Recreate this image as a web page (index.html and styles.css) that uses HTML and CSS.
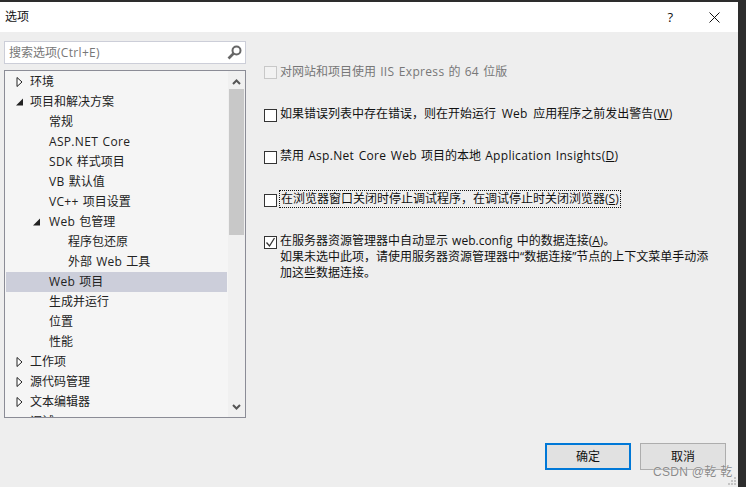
FILE: index.html
```html
<!DOCTYPE html>
<html lang="zh">
<head>
<meta charset="utf-8">
<title>选项</title>
<link rel="stylesheet" href="styles.css">
</head>
<body>
<div class="dialog">
  <header class="titlebar">
    <span class="title">选项</span>
    <span class="help">?</span>
    <svg class="close" width="11" height="11" viewBox="0 0 11 11"><path d="M.5.5l10 10M10.500.5l-10 10" stroke="#111" fill="none"/></svg>
  </header>
  <main class="body">
    <aside class="left">
      <div class="search">
        <span>搜索选项<span class="en">(Ctrl+E)</span></span>
        <svg width="15" height="15" viewBox="0 0 15 15"><circle cx="9.500" cy="5.500" r="4" fill="none" stroke="#666" stroke-width="2"/><path d="M6.500 8.500L1.500 13.500" stroke="#666" stroke-width="2.600" fill="none"/></svg>
      </div>
      <div class="treebox">
        <div class="tree">
          <div class="row l1"><svg class="arrow" width="6" height="10" viewBox="0 0 6 10"><path d="M.5.500L5.500 5 .5 9.500z" fill="#fff" stroke="#222"/></svg><span>环境</span></div>
          <div class="row l1"><svg class="arrow" width="7" height="10" viewBox="0 0 7 10"><path d="M7 1.500V8.500H0z" fill="#222"/></svg><span>项目和解决方案</span></div>
          <div class="row l2"><span>常规</span></div>
          <div class="row l2"><span class="en">ASP.NET Core</span></div>
          <div class="row l2"><span><span class="en">SDK</span> 样式项目</span></div>
          <div class="row l2"><span><span class="en">VB</span> 默认值</span></div>
          <div class="row l2"><span><span class="en">VC++</span> 项目设置</span></div>
          <div class="row l2b"><svg class="arrow" width="7" height="10" viewBox="0 0 7 10"><path d="M7 1.500V8.500H0z" fill="#222"/></svg><span><span class="en">Web</span> 包管理</span></div>
          <div class="row l3"><span>程序包还原</span></div>
          <div class="row l3"><span>外部 <span class="en">Web</span> 工具</span></div>
          <div class="row l2 selected"><span><span class="en">Web</span> 项目</span></div>
          <div class="row l2"><span>生成并运行</span></div>
          <div class="row l2"><span>位置</span></div>
          <div class="row l2"><span>性能</span></div>
          <div class="row l1"><svg class="arrow" width="6" height="10" viewBox="0 0 6 10"><path d="M.5.500L5.500 5 .5 9.500z" fill="#fff" stroke="#222"/></svg><span>工作项</span></div>
          <div class="row l1"><svg class="arrow" width="6" height="10" viewBox="0 0 6 10"><path d="M.5.500L5.500 5 .5 9.500z" fill="#fff" stroke="#222"/></svg><span>源代码管理</span></div>
          <div class="row l1"><svg class="arrow" width="6" height="10" viewBox="0 0 6 10"><path d="M.5.500L5.500 5 .5 9.500z" fill="#fff" stroke="#222"/></svg><span>文本编辑器</span></div>
          <div class="row l1"><svg class="arrow" width="6" height="10" viewBox="0 0 6 10"><path d="M.5.500L5.500 5 .5 9.500z" fill="#fff" stroke="#222"/></svg><span>调试</span></div>
        </div>
        <div class="scrollbar">
          <svg width="9" height="6" viewBox="0 0 9 6"><path d="M1 5l3.500-3.500L8 5" fill="none" stroke="#555" stroke-width="2"/></svg>
          <div class="thumb"></div>
          <svg width="9" height="6" viewBox="0 0 9 6"><path d="M1 1l3.500 3.500L8 1" fill="none" stroke="#555" stroke-width="2"/></svg>
        </div>
      </div>
    </aside>
    <section class="right">
      <div class="opt disabled"><span class="box"></span><span>对网站和项目使用 <span class="en">IIS Express</span> 的 <span class="en">64</span> 位版</span></div>
      <div class="opt"><span class="box"></span><span class="wide">如果错误列表中存在错误，则在开始运行 <span class="en">Web</span> 应用程序之前发出警告<span class="en">(<u>W</u>)</span></span></div>
      <div class="opt"><span class="box"></span><span>禁用 <span class="en">Asp.Net Core Web</span> 项目的本地 <span class="en">Application Insights(<u>D</u>)</span></span></div>
      <div class="opt"><span class="box"></span><span class="focus">在浏览器窗口关闭时停止调试程序，在调试停止时关闭浏览器(<u>S</u>)</span></div>
      <div class="opt multi">
        <span class="box"><svg width="11" height="11" viewBox="0 0 11 11"><path d="M1.500 5.500l3 3.500 5-8" fill="none" stroke="#333" stroke-width="1.300"/></svg></span>
        <span>在服务器资源管理器中自动显示 web.config 中的数据连接(<u>A</u>)。<br>如果未选中此项，请使用服务器资源管理器中“数据连接”节点的上下文菜单手动添加这些数据连接。</span>
      </div>
    </section>
  </main>
  <footer class="footer">
    <button class="btn primary">确定</button>
    <button class="btn">取消</button>
  </footer>
</div>
<div class="watermark">CSDN @乾 乾</div>
<svg class="grip" width="9" height="9" viewBox="0 0 9 9"><path d="M6 0h2v2H6zM3 3h2v2H3zM6 3h2v2H6zM0 6h2v2H0zM3 6h2v2H3zM6 6h2v2H6z" fill="#c4c4c4"/></svg>
</body>
</html>
```
FILE: styles.css
```css
* { box-sizing: border-box; }
html, body { margin: 0; height: 100%; }
body {
  width: 746px; height: 487px; overflow: hidden; position: relative;
  background: #2d2d2d; padding-top: 2px;
  font: 12px/16px "Open Sans", "Noto Sans CJK SC", sans-serif; color: #1e1e1e;
}
.en { letter-spacing: .32px; }
.dialog { width: 738px; height: 485px; background: #eeeeee; display: flex; flex-direction: column; }
.titlebar { height: 30px; flex: none; background: #fff; display: flex; align-items: center; padding: 0 18px 0 5px; color: #111; }
.title { flex: 1; }
.help { margin-right: 36px; font-size: 13px; }
.close { display: block; }
.body { flex: 1; display: flex; min-height: 0; padding: 9px 0 0 4px; }
.left { width: 242px; flex: none; }
.search {
  height: 23px; background: #fff; border: 1px solid #ccced8; color: #777;
  display: flex; align-items: center; justify-content: space-between; padding: 0 3px 0 4px;
}
.treebox { margin-top: 6px; height: 348px; border: 1px solid #8b8c96; background: #f5f5f5; display: flex; overflow: hidden; }
.tree { flex: 1; padding: 1px 0 0 1px; overflow: hidden; min-width: 0; word-spacing: 1px; }
.row { height: 20px; line-height: 18px; white-space: nowrap; display: flex; align-items: center; color: #222; }
.l1 { padding-left: 9px; }
.l2 { padding-left: 43px; }
.l2b { padding-left: 27px; }
.l3 { padding-left: 62px; }
.arrow { flex: none; }
.l1 .arrow { width: 9px; margin-right: 6px; }
.l2b .arrow { margin-right: 9px; }
.selected { background: #ccceda; }
.scrollbar { width: 17px; flex: none; margin-left: 1px; display: flex; flex-direction: column; align-items: center; justify-content: space-between; padding: 8px 0 7px; background: #f0f0f0; }
.thumb { width: 15px; height: 146px; background: #c8c8c8; margin-bottom: auto; margin-top: 4px; }
.right { flex: 1; padding: 23px 0 0 18px; min-width: 0; word-spacing: 1px; }
.opt { display: flex; align-items: flex-start; gap: 3px; margin-bottom: 26px; color: #111; }
.opt.multi { margin-bottom: 0; padding-right: 23px; }
.wide { word-spacing: 2.500px; }
.box { width: 13px; height: 13px; flex: none; margin-top: 3px; background: #fff; border: 1px solid #333; display: flex; align-items: center; justify-content: center; }
.disabled { color: #777; }
.disabled .box { border-color: #c8c8c8; background: #f2f2f2; margin-top: 2px; }
.opt:nth-child(3) { margin-bottom: 27px; }
.focus { outline: 1px dotted #111; outline-offset: 0; padding: 0 1px; }
.footer { height: 44px; flex: none; display: flex; justify-content: flex-end; align-items: flex-start; gap: 9px; padding-right: 12px; }
.btn { width: 86px; height: 27px; background: #e1e1e1; border: 1px solid #adadad; font: inherit; color: #111; padding: 0; }
.primary { border: 2px solid #0078d7; }
.watermark { position: absolute; left: 653px; top: 464px; font: 12px/16px "Liberation Sans", "Noto Sans CJK SC", sans-serif; color: #8a8a8a; text-shadow: 0 0 1px #fff; letter-spacing: .3px; }
.grip { position: absolute; left: 728px; top: 477px; }
```
